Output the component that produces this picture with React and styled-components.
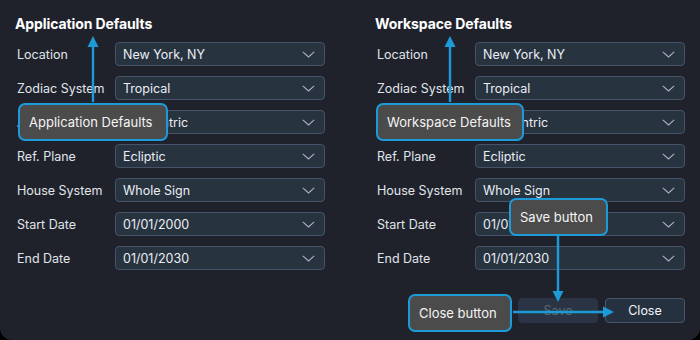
import React from 'react';
import styled, { createGlobalStyle } from 'styled-components';

const GlobalStyle = createGlobalStyle`
	html, body {
		margin: 0;
		padding: 0;
		background: #000000;
	}
	body {
		font-family: Inter, "Noto Sans", "Liberation Sans", sans-serif;
		-webkit-font-smoothing: antialiased;
	}
`;

const fields = [
	{ label: 'Location', value: 'New York, NY' },
	{ label: 'Zodiac System', value: 'Tropical' },
	{ label: 'Ayanamsa', value: 'Geocentric' },
	{ label: 'Ref. Plane', value: 'Ecliptic' },
	{ label: 'House System', value: 'Whole Sign' },
	{ label: 'Start Date', value: '01/01/2000' },
	{ label: 'End Date', value: '01/01/2030' },
];

const callouts = [
	{ text: 'Application Defaults', left: 18, top: 103, width: 150 },
	{ text: 'Workspace Defaults', left: 376, top: 103, width: 148 },
	{ text: 'Save button', left: 509, top: 198, width: 99 },
	{ text: 'Close button', left: 408, top: 294, width: 104 },
];

const Chevron = () => (
	<svg width="13" height="7" viewBox="0 0 13 7" fill="none">
		<path d="M0.8 0.8 L6.5 6 L12.2 0.8" stroke="#aab2c0" strokeWidth="1.1" />
	</svg>
);

const Column = ({ title }) => (
	<Section>
		<Heading>{title}</Heading>
		<Rows>
			{fields.map((item, index) => (
				<Row key={index * 31}>
					<Label>{item.label}</Label>
					<Select>
						<span>{item.value}</span>
						<Chevron />
					</Select>
				</Row>
			))}
		</Rows>
	</Section>
);

const Arrows = () => (
	<Overlay width="700" height="340" viewBox="0 0 700 340">
		<g stroke="#1d9bd9" strokeWidth="2.4" fill="none">
			<line x1="93" y1="102" x2="93" y2="45" />
			<line x1="450" y1="102" x2="450" y2="45" />
			<line x1="558" y1="235" x2="558" y2="293" />
			<line x1="513" y1="312" x2="604" y2="312" />
		</g>
		<g fill="#1d9bd9">
			<polygon points="93,36 87.5,47 98.5,47" />
			<polygon points="450,36 444.5,47 455.5,47" />
			<polygon points="558,302 552.5,291 563.5,291" />
			<polygon points="614,312 603,306.5 603,317.5" />
		</g>
	</Overlay>
);

export default function App() {
	return (
		<>
			<GlobalStyle />
			<Dialog>
				<Columns>
					<Column title="Application Defaults" />
					<Column title="Workspace Defaults" />
				</Columns>
				<Footer>
					<Button disabled>Save</Button>
					<Button>Close</Button>
				</Footer>
				<Arrows />
				{callouts.map((item, index) => (
					<Callout
						key={index * 17}
						style={{ left: item.left, top: item.top, width: item.width }}
					>
						{item.text}
					</Callout>
				))}
			</Dialog>
		</>
	);
}

const Dialog = styled.div`
	position: relative;
	width: 700px;
	height: 340px;
	box-sizing: border-box;
	background: #1f222b;
	border-radius: 0 0 12px 12px;
	padding: 15px 15px 0 15px;
	display: flex;
	flex-direction: column;
	overflow: hidden;
`;

const Columns = styled.div`
	display: grid;
	grid-template-columns: 310px 310px;
	column-gap: 50px;
`;

const Section = styled.div`
	display: flex;
	flex-direction: column;
`;

const Heading = styled.h2`
	margin: 0 0 9px 0;
	font-size: 14px;
	line-height: 18px;
	font-weight: 700;
	color: #ffffff;
	letter-spacing: -0.1px;
`;

const Rows = styled.div`
	display: flex;
	flex-direction: column;
	gap: 10px;
`;

const Row = styled.div`
	display: flex;
	align-items: center;
`;

const Label = styled.span`
	width: 98px;
	padding-left: 2px;
	font-size: 12.5px;
	color: #e0e5ec;
`;

const Select = styled.div`
	width: 210px;
	height: 24px;
	box-sizing: border-box;
	display: flex;
	align-items: center;
	justify-content: space-between;
	padding: 0 9px 0 7px;
	background: #283340;
	border: 1px solid #46536b;
	border-radius: 4px;
	font-size: 12.5px;
	color: #eaeef4;
`;

const Footer = styled.div`
	display: flex;
	justify-content: flex-end;
	gap: 7px;
	margin-top: 28px;
`;

const Button = styled.button`
	width: 80px;
	height: 25px;
	box-sizing: border-box;
	font-family: inherit;
	font-size: 12.5px;
	border-radius: 4px;
	background: ${({ disabled }) => (disabled ? '#2a3444' : '#263140')};
	border: 1px solid ${({ disabled }) => (disabled ? '#2a3444' : '#4a566e')};
	color: ${({ disabled }) => (disabled ? '#5d6778' : '#f2f5f9')};
	cursor: pointer;
`;

const Overlay = styled.svg`
	position: absolute;
	left: 0;
	top: 0;
	pointer-events: none;
	z-index: 1;
`;

const Callout = styled.div`
	position: absolute;
	z-index: 2;
	height: 38px;
	box-sizing: border-box;
	display: flex;
	align-items: center;
	padding-left: 9px;
	background: #4b4b4b;
	border: 2.5px solid #1d9bd9;
	border-radius: 7px;
	font-size: 13px;
	color: #f4f4f4;
	white-space: nowrap;
`;
